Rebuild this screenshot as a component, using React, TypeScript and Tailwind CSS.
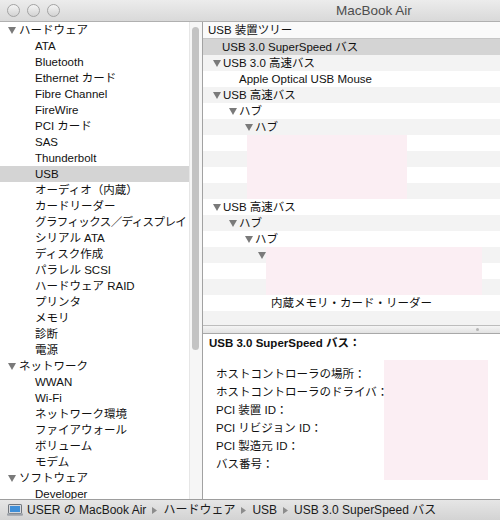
import React from 'react';

const font = { fontFamily: '"Liberation Sans", "Noto Sans CJK JP", sans-serif' };

type SideItem = { t: string; cat?: boolean; sel?: boolean; tight?: boolean };

const sidebar: SideItem[] = [
  { t: 'ハードウェア', cat: true },
  { t: 'ATA' },
  { t: 'Bluetooth' },
  { t: 'Ethernet カード' },
  { t: 'Fibre Channel' },
  { t: 'FireWire' },
  { t: 'PCI カード' },
  { t: 'SAS' },
  { t: 'Thunderbolt' },
  { t: 'USB', sel: true },
  { t: 'オーディオ（内蔵）' },
  { t: 'カードリーダー' },
  { t: 'グラフィックス／ディスプレイ', tight: true },
  { t: 'シリアル ATA' },
  { t: 'ディスク作成' },
  { t: 'パラレル SCSI' },
  { t: 'ハードウェア RAID' },
  { t: 'プリンタ' },
  { t: 'メモリ' },
  { t: '診断' },
  { t: '電源' },
  { t: 'ネットワーク', cat: true },
  { t: 'WWAN' },
  { t: 'Wi-Fi' },
  { t: 'ネットワーク環境' },
  { t: 'ファイアウォール' },
  { t: 'ボリューム' },
  { t: 'モデム' },
  { t: 'ソフトウェア', cat: true },
  { t: 'Developer' },
];

type TreeRow = {
  level?: number;
  t?: string;
  open?: boolean;
  sel?: boolean;
  pink?: 'a' | 'b';
};

const tree: TreeRow[] = [
  { level: 1, t: 'USB 3.0 SuperSpeed バス', sel: true },
  { level: 1, t: 'USB 3.0 高速バス', open: true },
  { level: 2, t: 'Apple Optical USB Mouse' },
  { level: 1, t: 'USB 高速バス', open: true },
  { level: 2, t: 'ハブ', open: true },
  { level: 3, t: 'ハブ', open: true },
  { pink: 'a' },
  { pink: 'a' },
  { pink: 'a' },
  { pink: 'a' },
  { level: 1, t: 'USB 高速バス', open: true },
  { level: 2, t: 'ハブ', open: true },
  { level: 3, t: 'ハブ', open: true },
  { level: 4, open: true, pink: 'b' },
  { pink: 'b' },
  { pink: 'b' },
  { level: 4, t: '内蔵メモリ・カード・リーダー' },
  {},
  {},
];

const indent: Record<number, string> = {
  1: 'pl-[10px]',
  2: 'pl-[26px]',
  3: 'pl-[42px]',
  4: 'pl-[58px]',
};

const leafIndent: Record<number, string> = {
  1: 'pl-[19px]',
  2: 'pl-[36px]',
  3: 'pl-[52px]',
  4: 'pl-[68px]',
};

const Tri = () => (
  <svg width="8" height="7" viewBox="0 0 8 7" className="shrink-0">
    <path d="M0 0H8L4 7Z" fill="#7a7a7a" />
  </svg>
);

const Sep = () => (
  <svg width="5" height="7" viewBox="0 0 5 7" className="shrink-0">
    <path d="M0 0L5 3.5L0 7Z" fill="#8c8c8c" />
  </svg>
);

const Laptop = () => (
  <svg width="16" height="12" viewBox="0 0 16 12" className="shrink-0">
    <rect x="1.5" y="0.5" width="13" height="9" rx="0.6" fill="#d6d9de" stroke="#6f747b" />
    <rect x="3" y="2" width="10" height="6" fill="#3f8fd8" />
    <path d="M0 9.6h16v1.2a1 1 0 0 1-1 1H1a1 1 0 0 1-1-1z" fill="#9ea3aa" />
  </svg>
);

const Light = () => (
  <div className="h-[13px] w-[13px] rounded-full border border-[#a3a3a3] bg-gradient-to-b from-[#f4f4f4] to-[#d3d3d3]" />
);

export default function App() {
  return (
    <div className="flex h-[520px] w-[500px] flex-col overflow-hidden bg-white text-[11.5px] leading-[16px] text-[#111]" style={font}>
      {/* title bar */}
      <div className="relative flex h-[22px] shrink-0 items-center border-b border-[#b0b0b0] bg-gradient-to-b from-[#ececec] to-[#d9d9d9]">
        <div className="flex gap-[7px] pl-[7px]">
          <Light />
          <Light />
          <Light />
        </div>
        <div className="pl-[276px] text-[13.5px] text-[#4e4e4e]">MacBook Air</div>
      </div>

      <div className="flex min-h-0 flex-1">
        {/* sidebar */}
        <div className="w-[189px] shrink-0 overflow-hidden">
          {sidebar.map((s, i) =>
            s.cat ? (
              <div key={i} className="flex h-[16px] items-center gap-[3px] whitespace-nowrap pl-[8px]">
                <Tri />
                <span>{s.t}</span>
              </div>
            ) : (
              <div
                key={i}
                className={`h-[16px] whitespace-nowrap pl-[35px] ${s.sel ? 'bg-[#d4d4d4]' : ''} ${s.tight ? 'tracking-[-0.6px]' : ''}`}
              >
                {s.t}
              </div>
            ),
          )}
        </div>
        <div className="w-[13px] shrink-0 border-l border-[#e6e6e6] bg-[#f6f6f6] pt-[5px]">
          <div className="ml-[2px] h-[323px] w-[7px] rounded-full bg-[#c3c3c3]" />
        </div>
        <div className="w-px shrink-0 bg-[#a2a2a2]" />

        {/* right pane */}
        <div className="flex min-w-0 flex-1 flex-col">
          <div className="h-[303px] shrink-0 overflow-hidden">
            <div className="h-[17px] border-b border-[#c6c6c6] bg-[#fafafa] pl-[5px] whitespace-nowrap">USB 装置ツリー</div>
            {tree.map((r, i) => {
              const bg = r.sel ? 'bg-[#d4d4d4]' : i % 2 === 1 ? 'bg-[#f3f3f3]' : 'bg-white';
              if (r.pink === 'a') {
                return (
                  <div key={i} className={`h-[16px] pl-[44px] ${bg}`}>
                    <div className="h-[16px] w-[160px] bg-[#fbeef3]" />
                  </div>
                );
              }
              if (r.pink === 'b') {
                return (
                  <div key={i} className={`flex h-[16px] items-center ${bg} ${r.open ? 'pl-[55px]' : 'pl-[63px]'}`}>
                    {r.open && (
                      <div className="w-[8px]">
                        <Tri />
                      </div>
                    )}
                    <div className="h-[16px] w-[216px] bg-[#fbeef3]" />
                  </div>
                );
              }
              if (!r.level) return <div key={i} className={`h-[16px] ${bg}`} />;
              if (r.open) {
                return (
                  <div key={i} className={`flex h-[16px] items-center gap-[2px] whitespace-nowrap ${indent[r.level]} ${bg}`}>
                    <Tri />
                    <span>{r.t}</span>
                  </div>
                );
              }
              return (
                <div key={i} className={`h-[16px] whitespace-nowrap ${leafIndent[r.level]} ${bg}`}>
                  {r.t}
                </div>
              );
            })}
          </div>

          {/* splitter */}
          <div className="flex h-[9px] shrink-0 items-center justify-end border-y border-t-[#bdbdbd] border-b-[#a8a8a8] bg-gradient-to-b from-[#f5f5f5] to-[#e2e2e2] pr-[21px]">
            <div className="h-[3px] w-[3px] rounded-full bg-[#b5b5b5]" />
          </div>

          {/* detail pane */}
          <div className="min-h-0 flex-1 overflow-hidden pl-[6px] pt-[1px]">
            <div className="h-[16px] whitespace-nowrap font-bold">USB 3.0 SuperSpeed バス：</div>
            <div className="mt-[9px] flex">
              <div className="w-[175px] shrink-0 pl-[7px] pt-[5px] leading-[18px] whitespace-nowrap">
                <div>ホストコントローラの場所：</div>
                <div>ホストコントローラのドライバ：</div>
                <div>PCI 装置 ID：</div>
                <div>PCI リビジョン ID：</div>
                <div>PCI 製造元 ID：</div>
                <div>バス番号：</div>
              </div>
              <div className="h-[120px] w-[104px] bg-[#fbeef3]" />
            </div>
          </div>
        </div>
      </div>

      {/* status bar */}
      <div className="flex h-[21px] shrink-0 items-center whitespace-nowrap border-t border-[#9d9d9d] bg-gradient-to-b from-[#e6e6e6] to-[#d3d3d3] pl-[7px] text-[12px] text-[#1a1a1a]">
        <Laptop />
        <span className="ml-[4px] shrink-0">USER の MacBook Air</span>
        <span className="mx-[6px] shrink-0"><Sep /></span>
        <span className="shrink-0">ハードウェア</span>
        <span className="mx-[6px] shrink-0"><Sep /></span>
        <span className="shrink-0">USB</span>
        <span className="mx-[6px] shrink-0"><Sep /></span>
        <span className="shrink-0">USB 3.0 SuperSpeed バス</span>
      </div>
    </div>
  );
}
